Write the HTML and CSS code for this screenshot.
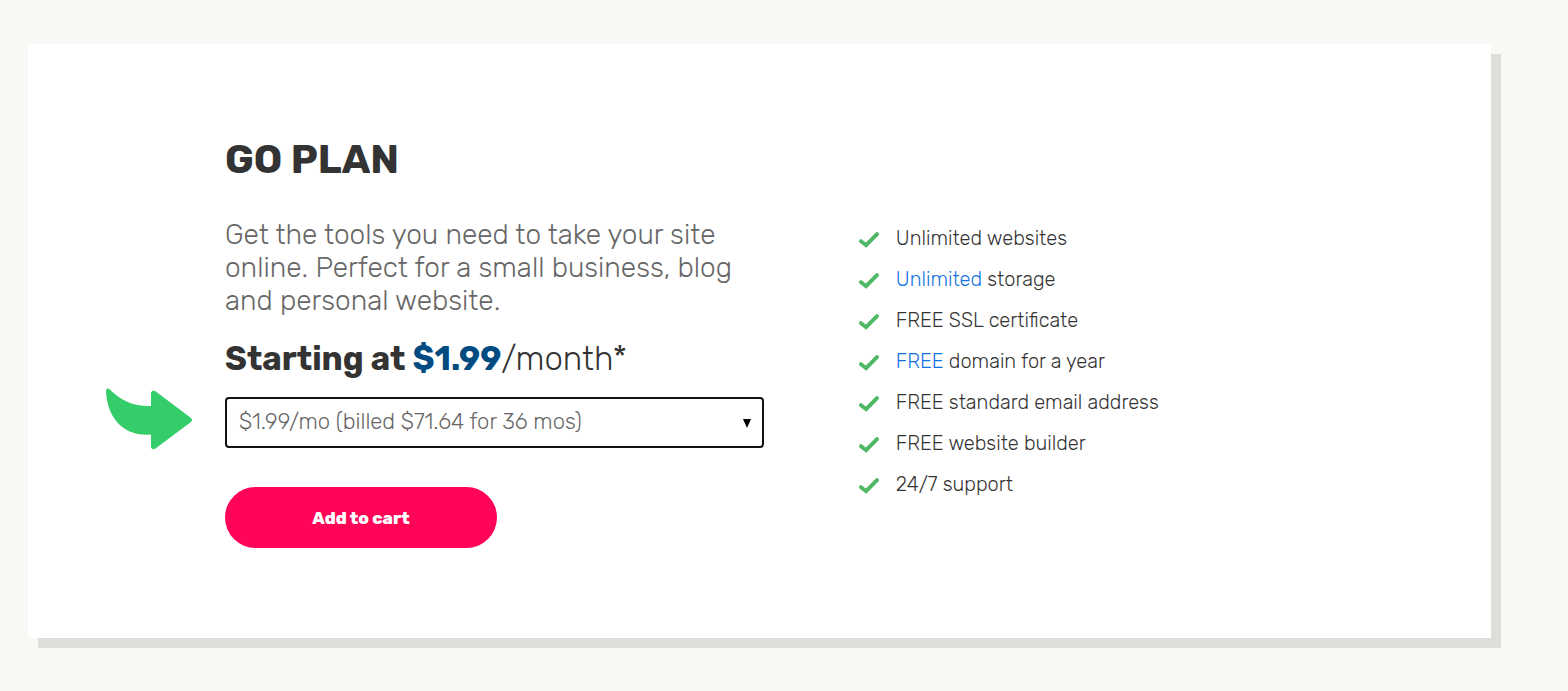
FILE: index.html
```html
<!DOCTYPE html>
<html lang="en">
<head>
<meta charset="utf-8">
<meta name="viewport" content="width=device-width, initial-scale=1">
<title>Go Plan</title>
<link rel="stylesheet" href="styles.css">
</head>
<body>
<svg width="0" height="0" class="sprite" aria-hidden="true">
  <symbol id="check" viewBox="0 0 22 18"><path d="M3 10.2 8.1 14.2 19 3.2" fill="none" stroke="#4fb865" stroke-width="4" stroke-linecap="round"/></symbol>
</svg>
<main class="card">
  <section class="plan">
    <h1 class="plan-title">GO PLAN</h1>
    <p class="plan-text">Get the tools you need to take your site<br>online. Perfect for a small business, blog<br>and personal website.</p>
    <h2 class="price">Starting at <span class="amount">$1.99</span><span class="period">/month*</span></h2>
    <div class="term">
      <svg class="pointer" viewBox="0 0 88 62" aria-hidden="true"><path d="M4 0.800C14 11 26 18.500 46 18V5Q47 1 50.500 3.300L86 30Q88 32 86 34L50.500 60.500Q47 62.500 46 59V46.500C19 49 2 30 1 3Q1-.5 4 .8Z" fill="#35cd69"/></svg>
      <select class="term-select" aria-label="Billing term">
        <option>$1.99/mo (billed $71.64 for 36 mos)</option>
      </select>
      <svg class="caret" viewBox="0 0 8 9" aria-hidden="true"><path d="M0 0H8L4 9Z"/></svg>
    </div>
    <button class="cart" type="button">Add to cart</button>
  </section>
  <ul class="features">
    <li><svg class="check"><use href="#check"/></svg><span>Unlimited websites</span></li>
    <li><svg class="check"><use href="#check"/></svg><span><a href="#storage">Unlimited</a> storage</span></li>
    <li><svg class="check"><use href="#check"/></svg><span>FREE SSL certificate</span></li>
    <li><svg class="check"><use href="#check"/></svg><span><a href="#domain">FREE</a> domain for a year</span></li>
    <li><svg class="check"><use href="#check"/></svg><span>FREE standard email address</span></li>
    <li><svg class="check"><use href="#check"/></svg><span>FREE website builder</span></li>
    <li><svg class="check"><use href="#check"/></svg><span>24/7 support</span></li>
  </ul>
</main>
</body>
</html>
```
FILE: styles.css
```css
* { box-sizing: border-box; }
body {
  margin: 0;
  padding: 44px 77px 53px 28px;
  background: #f9f8f4;
  color: #333;
  font-family: Rubik, Roboto, "Liberation Sans", sans-serif;
  font-weight: 300;
}
.sprite { position: absolute; }
.card {
  display: grid;
  grid-template-columns: 21fr 17fr;
  column-gap: 94px;
  padding: 92px 197px 90px;
  background: #fff;
  box-shadow: 10px 10px 0 #deddd9;
}
.plan-title {
  margin: 0 0 34px;
  font-size: 40px;
  line-height: 48px;
  font-weight: 700;
}
.plan-text {
  margin: 0;
  color: #666;
  font-size: 28px;
  line-height: 33px;
  white-space: nowrap;
}
.price {
  margin: 21px 0 17px;
  font-size: 33px;
  line-height: 42px;
  font-weight: 700;
}
.amount { color: #004b7f; }
.period { font-weight: 300; }
.term {
  position: relative;
  margin-bottom: 39px;
}
.term-select {
  display: block;
  width: 100%;
  height: 51px;
  padding: 0 32px 2px 12px;
  border: 2px solid #111;
  border-radius: 4px;
  background: #fff;
  color: #666;
  font: inherit;
  font-size: 22px;
  appearance: none;
}
.caret {
  position: absolute;
  right: 13px;
  top: 22px;
  width: 8px;
  height: 9px;
  pointer-events: none;
}
.pointer {
  position: absolute;
  left: -120px;
  top: -9px;
  width: 88px;
  height: 62px;
}
.cart {
  display: block;
  width: 272px;
  height: 61px;
  border: 0;
  border-radius: 31px;
  background: #ff0558;
  color: #fff;
  font: inherit;
  font-size: 17px;
  font-weight: 800;
}
.features {
  margin: 82px 0 0;
  padding: 0;
  list-style: none;
  font-size: 20px;
  line-height: 41px;
  white-space: nowrap;
}
.features li {
  display: flex;
  align-items: center;
  gap: 16px;
}
.check {
  width: 22px;
  height: 18px;
  margin-top: 2px;
}
.features a {
  color: #1272e2;
  text-decoration: none;
}
```
